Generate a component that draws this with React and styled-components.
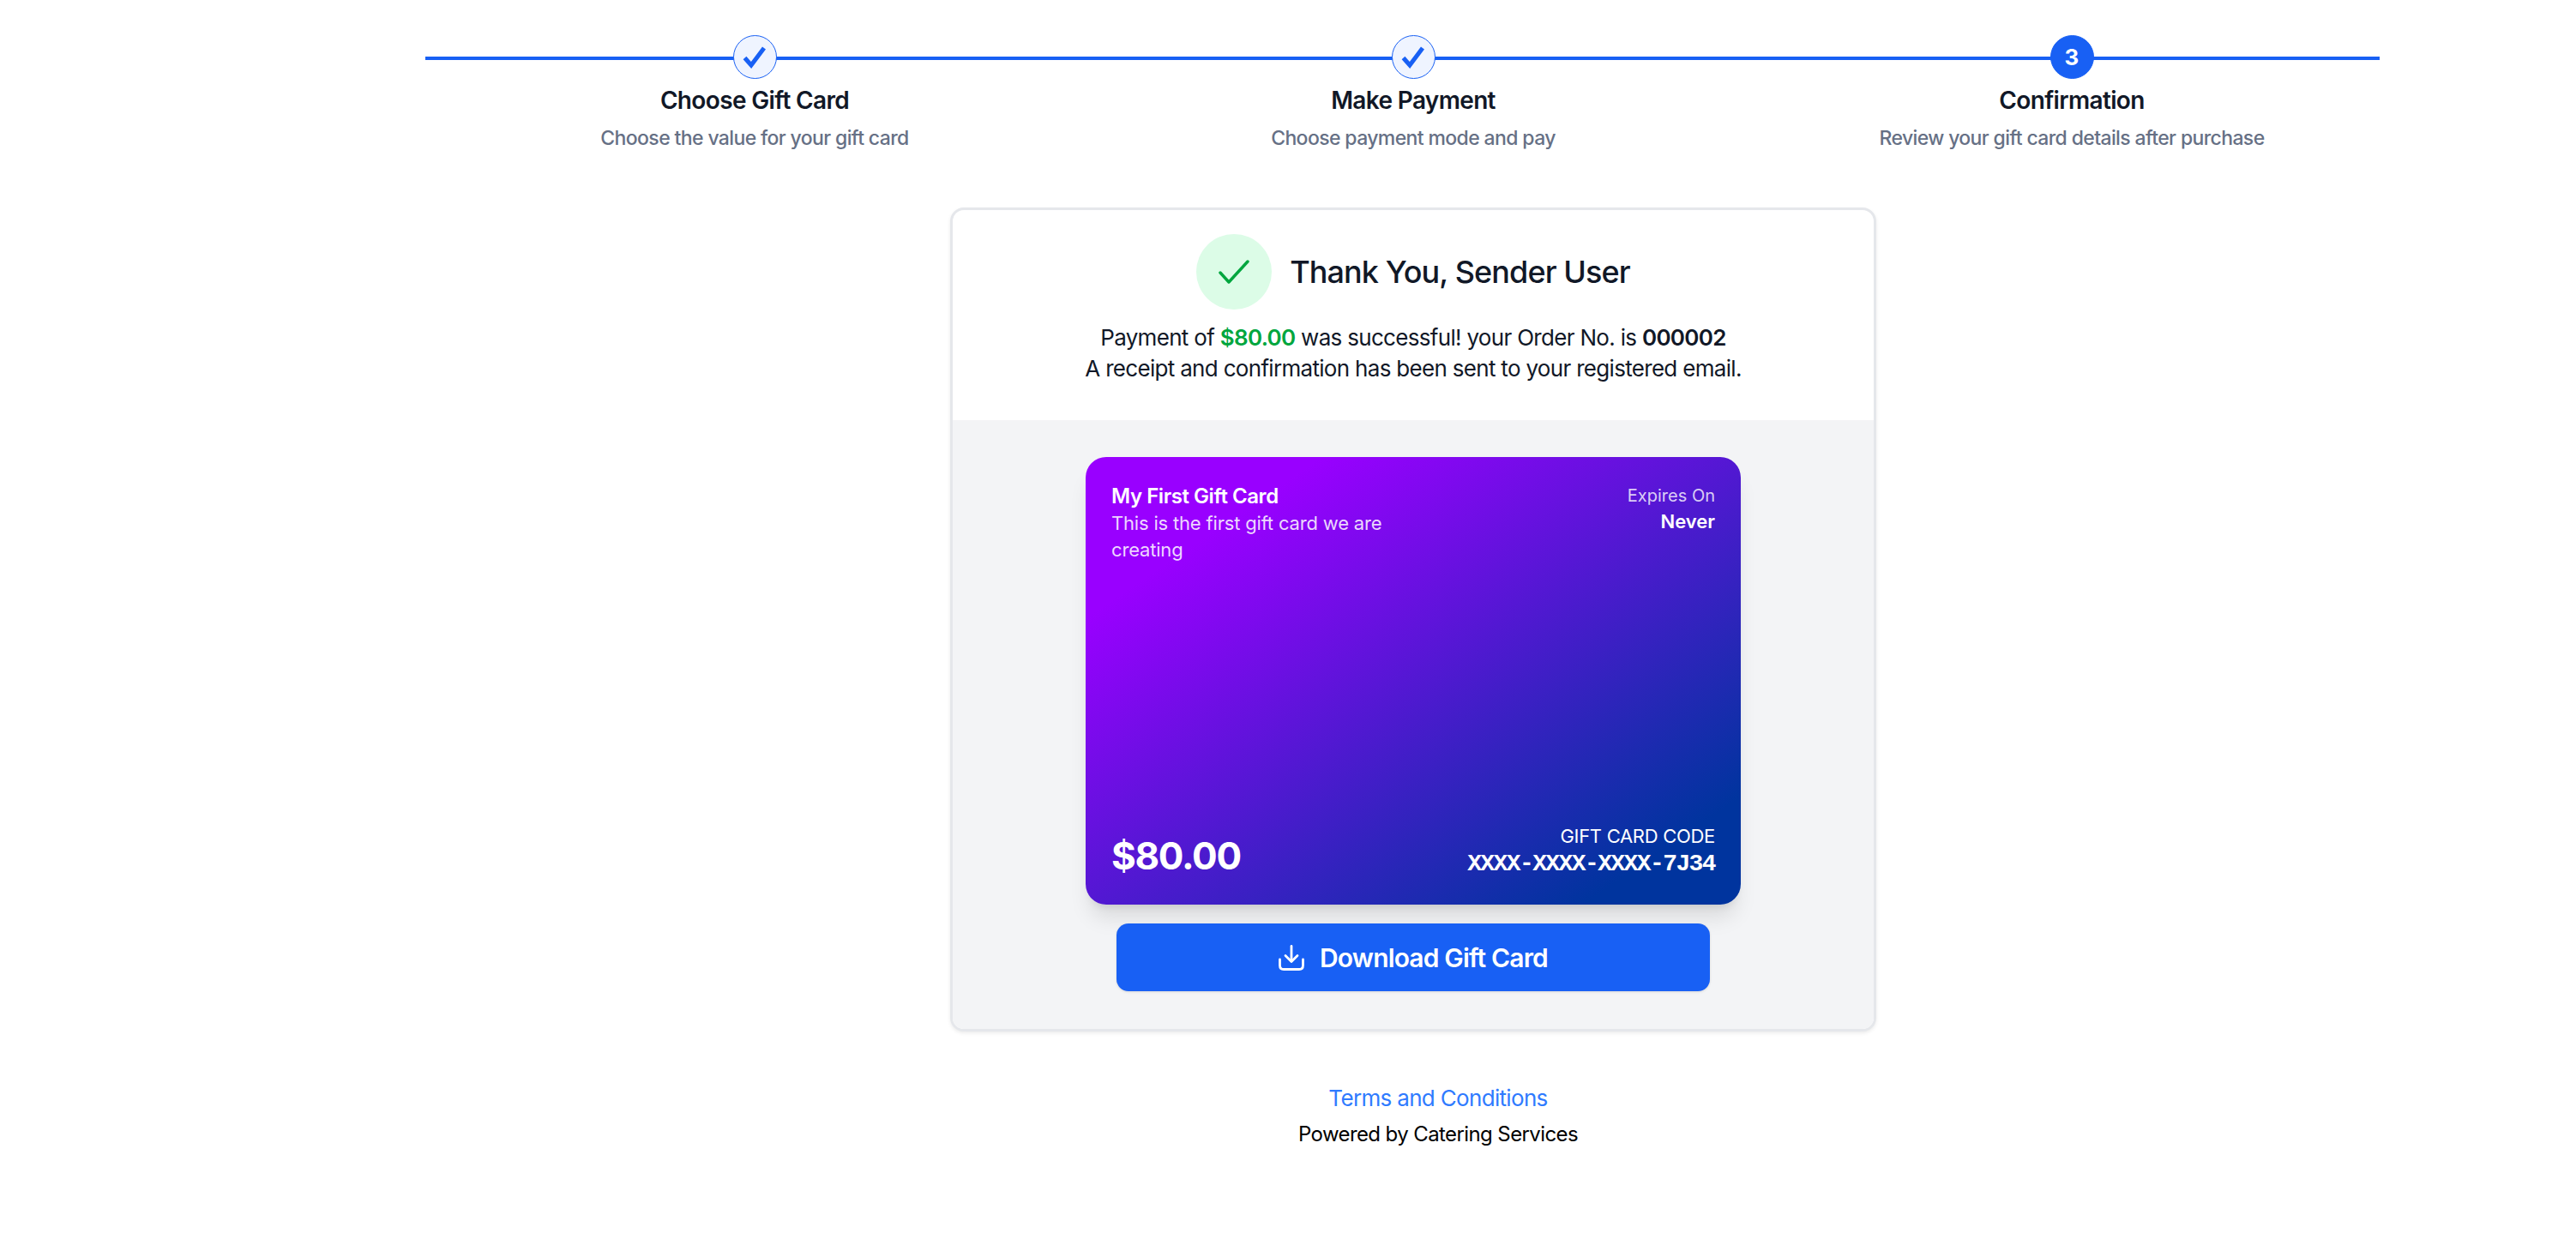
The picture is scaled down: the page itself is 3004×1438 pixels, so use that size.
import React from "react";
import styled, { createGlobalStyle } from "styled-components";

const Global = createGlobalStyle`
  html, body { margin: 0; padding: 0; background: #fff; }
  body { font-family: Inter, "Noto Sans", sans-serif; color: #111827; }
  * { box-sizing: border-box; }
`;

const Page = styled.div`
  width: 2304px;
  margin-left: 496px;
  padding-top: 41px;
`;

const Stepper = styled.ol`
  position: relative;
  display: grid;
  grid-template-columns: repeat(3, 1fr);
  list-style: none;
  margin: 0;
  padding: 0;
  &::before {
    content: "";
    position: absolute;
    left: 0;
    right: 25px;
    top: 25px;
    height: 4px;
    background: #1860f4;
  }
`;

const Step = styled.li`
  position: relative;
  display: flex;
  flex-direction: column;
  align-items: center;
`;

const StepCircle = styled.div`
  width: 51px;
  height: 51px;
  border-radius: 50%;
  display: flex;
  align-items: center;
  justify-content: center;
  border: 1.5px solid #1860f4;
  background: ${(p) => (p.$active ? "#1860f4" : "#eff4ff")};
  color: ${(p) => (p.$active ? "#fff" : "#1860f4")};
  font-size: 26px;
  font-weight: 700;
`;

const StepTitle = styled.div`
  margin-top: 8px;
  font-size: 28px;
  line-height: 34px;
  font-weight: 600;
  letter-spacing: -0.65px;
  color: #111827;
`;

const StepSub = styled.div`
  margin-top: 11px;
  font-size: 23px;
  line-height: 32px;
  font-weight: 500;
  letter-spacing: -0.62px;
  color: #667085;
`;

const Card = styled.section`
  width: 1080px;
  margin: 65px auto 0;
  border: 3px solid #e5e7eb;
  border-radius: 16px;
  overflow: hidden;
  box-shadow: 0 2px 4px rgba(0, 0, 0, 0.08);
  background: #fff;
`;

const CardHead = styled.header`
  height: 245px;
  padding-top: 28px;
  display: flex;
  flex-direction: column;
  align-items: center;
`;

const TitleRow = styled.div`
  display: flex;
  align-items: center;
  gap: 21px;
`;

const SuccessCircle = styled.div`
  width: 88px;
  height: 88px;
  border-radius: 50%;
  background: #dcfce7;
  display: flex;
  align-items: center;
  justify-content: center;
  color: #00a63e;
`;

const Heading = styled.h1`
  margin: 0;
  font-size: 36px;
  font-weight: 500;
  letter-spacing: -0.9px;
  color: #111827;
`;

const Message = styled.p`
  margin: 15px 0 0;
  font-size: 26px;
  line-height: 36px;
  letter-spacing: -0.69px;
  text-align: center;
  color: #111827;
`;

const Amount = styled.span`
  color: #00a63e;
  font-weight: 600;
`;

const OrderNo = styled.span`
  font-weight: 600;
`;

const CardBody = styled.div`
  background: #f3f4f6;
  padding: 43px 0 44px;
  display: flex;
  flex-direction: column;
  align-items: center;
`;

const GiftCard = styled.div`
  width: 764px;
  height: 522px;
  border-radius: 24px;
  padding: 30px 30px 29px;
  display: flex;
  flex-direction: column;
  justify-content: space-between;
  color: #fff;
  background: linear-gradient(to bottom right, #9900ff 18%, #00349e 88%);
  box-shadow: 0 20px 25px -5px rgba(0, 0, 0, 0.1), 0 8px 10px -6px rgba(0, 0, 0, 0.1);
`;

const GiftRow = styled.div`
  display: flex;
  justify-content: space-between;
  align-items: ${(p) => p.$align || "flex-start"};
`;

const GiftLeft = styled.div`
  width: 350px;
`;

const GiftName = styled.div`
  font-size: 24px;
  line-height: 32px;
  font-weight: 600;
  letter-spacing: -0.45px;
`;

const GiftDesc = styled.div`
  font-size: 22px;
  line-height: 31px;
  letter-spacing: -0.18px;
  color: rgba(255, 255, 255, 0.85);
`;

const GiftRight = styled.div`
  text-align: right;
`;

const Expires = styled.div`
  font-size: 20px;
  line-height: 30px;
  color: rgba(255, 255, 255, 0.8);
`;

const Never = styled.div`
  font-size: 22px;
  line-height: 30px;
  font-weight: 600;
`;

const Price = styled.div`
  font-size: 44px;
  line-height: 54px;
  font-weight: 700;
  letter-spacing: -1.3px;
  margin-top: 10px;
`;

const CodeLabel = styled.div`
  font-size: 22px;
  line-height: 30px;
  letter-spacing: -0.3px;
`;

const CodeValue = styled.div`
  font-family: "Liberation Mono", monospace;
  font-size: 28px;
  line-height: 36px;
  font-weight: 700;
  letter-spacing: -1.6px;
`;

const DownloadButton = styled.button`
  margin-top: 22px;
  width: 692px;
  height: 79px;
  border: 0;
  border-radius: 14px;
  background: #1860f4;
  color: #fff;
  font-family: inherit;
  font-size: 30px;
  font-weight: 600;
  letter-spacing: -0.85px;
  display: flex;
  align-items: center;
  justify-content: center;
  gap: 18px;
  box-shadow: 0 1px 3px rgba(0, 0, 0, 0.12);
`;

const Footer = styled.footer`
  margin: 60px 0 0 58px;
  display: flex;
  flex-direction: column;
  align-items: center;
`;

const TermsLink = styled.a`
  font-size: 26px;
  line-height: 36px;
  letter-spacing: -0.67px;
  color: #2f7bff;
  text-decoration: none;
`;

const Powered = styled.div`
  margin-top: 6px;
  font-size: 24px;
  line-height: 36px;
  letter-spacing: -0.6px;
  color: #000;
`;

const StepCheck = () => (
  <svg width="28" height="26" viewBox="0 0 28 26" fill="none" stroke="currentColor" strokeWidth="5">
    <path d="M2.5 13.5 L10 22 L25 2" />
  </svg>
);

const BigCheck = () => (
  <svg width="36" height="28" viewBox="0 0 36 28" fill="none" stroke="currentColor" strokeWidth="3.4" strokeLinecap="round" strokeLinejoin="round">
    <path d="M2 15 L12 26 L34 2" />
  </svg>
);

const DownloadIcon = () => (
  <svg width="30" height="30" viewBox="0 0 30 30" fill="none" stroke="currentColor" strokeWidth="2.8" strokeLinecap="round" strokeLinejoin="round">
    <path d="M15 1.5 V19" />
    <path d="M8 12.5 L15 19.5 L22 12.5" />
    <path d="M1.5 17 V24 Q1.5 28.5 6 28.5 H24 Q28.5 28.5 28.5 24 V17" />
  </svg>
);

const steps = [
  { title: "Choose Gift Card", sub: "Choose the value for your gift card", done: true },
  { title: "Make Payment", sub: "Choose payment mode and pay", done: true },
  { title: "Confirmation", sub: "Review your gift card details after purchase", n: 3 },
];

export default function App() {
  return (
    <Page>
      <Global />
      <Stepper>
        {steps.map((s) => (
          <Step key={s.title}>
            <StepCircle $active={!s.done}>{s.done ? <StepCheck /> : s.n}</StepCircle>
            <StepTitle>{s.title}</StepTitle>
            <StepSub>{s.sub}</StepSub>
          </Step>
        ))}
      </Stepper>
      <Card>
        <CardHead>
          <TitleRow>
            <SuccessCircle>
              <BigCheck />
            </SuccessCircle>
            <Heading>Thank You, Sender User</Heading>
          </TitleRow>
          <Message>
            Payment of <Amount>$80.00</Amount> was successful! your Order No. is <OrderNo>000002</OrderNo>
            <br />
            A receipt and confirmation has been sent to your registered email.
          </Message>
        </CardHead>
        <CardBody>
          <GiftCard>
            <GiftRow>
              <GiftLeft>
                <GiftName>My First Gift Card</GiftName>
                <GiftDesc>This is the first gift card we are creating</GiftDesc>
              </GiftLeft>
              <GiftRight>
                <Expires>Expires On</Expires>
                <Never>Never</Never>
              </GiftRight>
            </GiftRow>
            <GiftRow $align="center">
              <Price>$80.00</Price>
              <GiftRight>
                <CodeLabel>GIFT CARD CODE</CodeLabel>
                <CodeValue>XXXX-XXXX-XXXX-7J34</CodeValue>
              </GiftRight>
            </GiftRow>
          </GiftCard>
          <DownloadButton>
            <DownloadIcon />
            Download Gift Card
          </DownloadButton>
        </CardBody>
      </Card>
      <Footer>
        <TermsLink href="#">Terms and Conditions</TermsLink>
        <Powered>Powered by Catering Services</Powered>
      </Footer>
    </Page>
  );
}
